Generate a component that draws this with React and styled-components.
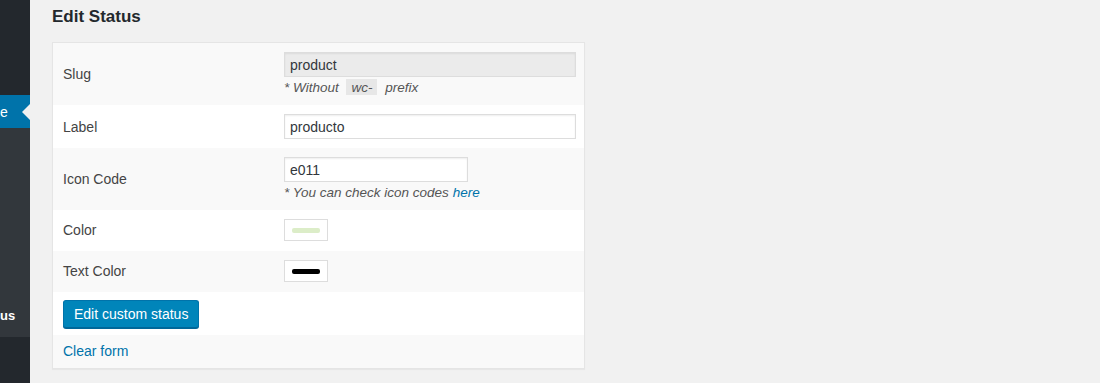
import React from "react";
import styled, { createGlobalStyle } from "styled-components";

const Global = createGlobalStyle`
  html, body { margin: 0; padding: 0; background: #f1f1f1; }
  body { font-family: "Liberation Sans", Arial, sans-serif; color: #444; }
  * { box-sizing: border-box; }
`;

const Page = styled.div`
  display: flex;
  min-height: 383px;
  height: 383px;
  overflow: hidden;
`;

const Sidebar = styled.nav`
  width: 30px;
  flex: none;
  display: flex;
  flex-direction: column;
  background: #23282d;
  color: #fff;
`;

const SideTop = styled.div`
  height: 95px;
`;

const ActiveItem = styled.div`
  position: relative;
  height: 33px;
  background: #0073aa;
  display: flex;
  align-items: center;
  font-size: 14px;
  color: #fff;
  &::after {
    content: "";
    position: absolute;
    right: 0;
    top: 50%;
    margin-top: -8px;
    border-style: solid;
    border-width: 8px 8px 8px 0;
    border-color: transparent #f1f1f1 transparent transparent;
  }
`;

const SubMenu = styled.div`
  height: 209px;
  background: #32373c;
  display: flex;
  flex-direction: column;
  justify-content: flex-end;
  padding-bottom: 10px;
`;

const SubItem = styled.div`
  font-size: 13px;
  font-weight: 700;
  color: #fff;
  line-height: 22px;
  white-space: nowrap;
`;

const Main = styled.main`
  flex: 1;
  padding: 6px 0 0 22px;
`;

const Heading = styled.h2`
  margin: 0 0 14px;
  font-size: 17px;
  font-weight: 700;
  line-height: 22px;
  color: #23282d;
`;

const Card = styled.div`
  width: 533px;
  background: #fff;
  border: 1px solid #e5e5e5;
  box-shadow: 0 1px 1px rgba(0, 0, 0, 0.04);
`;

const Row = styled.div`
  display: flex;
  align-items: center;
  padding: ${(p) => p.$pt || 9}px 9px ${(p) => p.$pb || 9}px 10px;
  background: ${(p) => (p.$alt ? "#f9f9f9" : "#fff")};
`;

const Label = styled.div`
  width: 221px;
  flex: none;
  font-size: 14px;
  color: #444;
`;

const Field = styled.div`
  flex: 1;
  display: flex;
  flex-direction: column;
  gap: 2px;
`;

const Input = styled.input`
  width: ${(p) => p.$w || 292}px;
  height: 25px;
  padding: 2px 5px;
  border: 1px solid #ddd;
  box-shadow: inset 0 1px 2px rgba(0, 0, 0, 0.07);
  background: ${(p) => (p.disabled ? "#ebebeb" : "#fff")};
  color: #32373c;
  font-family: "Liberation Sans", Arial, sans-serif;
  font-size: 14px;
  outline: none;
`;

const Hint = styled.div`
  font-size: 13.5px;
  font-style: italic;
  color: #555;
  line-height: 17px;
`;

const Code = styled.span`
  background: rgba(0, 0, 0, 0.07);
  padding: 1px 5px 0;
  margin: 0 4px;
`;

const Link = styled.a`
  color: #0073aa;
  text-decoration: none;
  font-size: ${(p) => p.$size || 13.5}px;
  font-style: ${(p) => (p.$italic ? "italic" : "normal")};
`;

const Swatch = styled.div`
  width: 44px;
  height: 22px;
  border: 1px solid #ddd;
  background: #fff;
  display: flex;
  align-items: center;
  justify-content: center;
`;

const SwatchBar = styled.span`
  width: 28px;
  height: 5px;
  border-radius: 2px;
  background: ${(p) => p.$color};
`;

const Button = styled.button`
  height: 28px;
  padding: 0 10px 1px;
  background: #0085ba;
  border: 1px solid #0073aa;
  border-bottom-color: #006799;
  box-shadow: 0 1px 0 #006799;
  border-radius: 3px;
  color: #fff;
  font-family: "Liberation Sans", Arial, sans-serif;
  font-size: 14px;
  cursor: pointer;
`;

export default function App() {
  return (
    <>
      <Global />
      <Page>
        <Sidebar>
          <SideTop />
          <ActiveItem>e</ActiveItem>
          <SubMenu>
            <SubItem>us</SubItem>
          </SubMenu>
        </Sidebar>
        <Main>
          <Heading>Edit Status</Heading>
          <Card>
            <Row $alt>
              <Label>Slug</Label>
              <Field>
                <Input disabled defaultValue="product" />
                <Hint>
                  * Without <Code>wc-</Code> prefix
                </Hint>
              </Field>
            </Row>
            <Row>
              <Label>Label</Label>
              <Field>
                <Input defaultValue="producto" />
              </Field>
            </Row>
            <Row $alt>
              <Label>Icon Code</Label>
              <Field>
                <Input $w={184} defaultValue="e011" />
                <Hint>
                  * You can check icon codes <Link href="#" $italic>here</Link>
                </Hint>
              </Field>
            </Row>
            <Row $pt={9} $pb={10}>
              <Label>Color</Label>
              <Field>
                <Swatch>
                  <SwatchBar $color="#dcedc8" />
                </Swatch>
              </Field>
            </Row>
            <Row $alt $pt={9} $pb={10}>
              <Label>Text Color</Label>
              <Field>
                <Swatch>
                  <SwatchBar $color="#000" />
                </Swatch>
              </Field>
            </Row>
            <Row $pt={8} $pb={7}>
              <Button>Edit custom status</Button>
            </Row>
            <Row $alt $pt={8} $pb={9}>
              <Link href="#" $size={14}>Clear form</Link>
            </Row>
          </Card>
        </Main>
      </Page>
    </>
  );
}
